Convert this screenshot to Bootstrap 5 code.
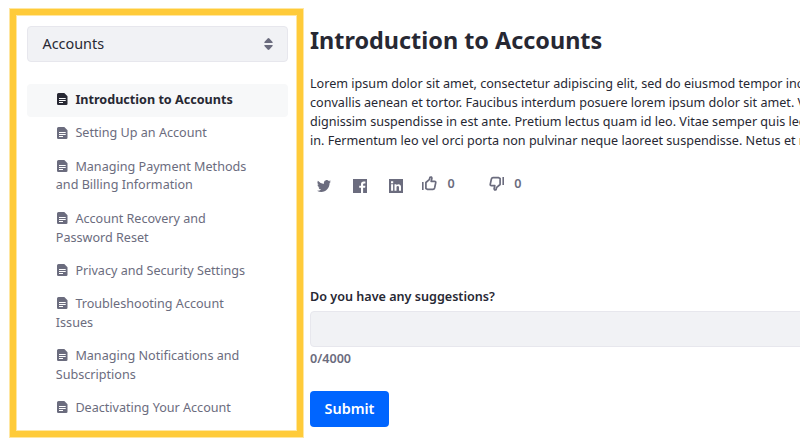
<!DOCTYPE html>
<html lang="en">
<head>
<meta charset="utf-8">
<meta name="viewport" content="width=device-width, initial-scale=1">
<title>Introduction to Accounts</title>
<link rel="stylesheet" href="https://cdn.jsdelivr.net/npm/bootstrap@5.3.0/dist/css/bootstrap.min.css">
<style>
body{font-family:"Noto Sans",sans-serif;font-size:12.6px;line-height:18.9px;color:#272833;background:#fff;height:441px}
.side{width:293px;height:428px;margin:9px 0 0 10px;border:6px solid #ffcb39;box-shadow:0 0 0 1px #ffe7a2,inset 0 0 0 1px #ffe7a2;padding:11px 9px 0 11px}
.picker{height:36px;background:#f1f2f5;border:1px solid #e7e7ed;border-radius:4px;font-size:14.4px;color:#272833;padding:0 14px 0 14.5px}
.topics{margin-top:22px}
.topics .nav-link{color:#6b6c7e;padding:7.2px 37px 7.1px 28.8px;border-radius:4px}
.topics .nav-link.active{background:#f7f8f9;color:#272833;font-weight:700}
.doc{width:11px;height:12px;margin:-3px 7.400px 0 1.200px;vertical-align:middle}
.content{margin-left:7px;min-width:0}
.title{font-size:23.4px;line-height:28px;font-weight:700;margin:26px 0 20px}
.intro{line-height:19px}
.social{color:#6b6c7e;height:20px;margin-top:24px;line-height:19px;font-weight:600}
.social svg{display:block}
.tw{margin:6px 22px 0 7px}
.fb{margin:5px 22px 0 0}
.in{margin:5px 19px 0 0}
.up{margin:2px 10.5px 0 0}
.down{margin:2px 10px 0 34.5px}
.ask{margin-top:93px;line-height:19px;font-weight:600}
.answer{height:36px;width:560px;margin-top:5px;background:#f1f2f5;border:1px solid #e7e7ed;border-radius:4px}
.count{color:#6b6c7e;font-weight:600;line-height:19px;margin-top:2px}
.send{width:79px;height:36px;margin-top:23px;background:#0065ff;border:0;border-radius:4px;font-size:14.4px;font-weight:600;padding:0}
</style>
<script src="https://cdn.jsdelivr.net/npm/bootstrap@5.3.0/dist/js/bootstrap.bundle.min.js"></script>
</head>
<body class="d-flex align-items-start overflow-hidden">
<svg class="d-none" xmlns="http://www.w3.org/2000/svg">
  <symbol id="doc" viewBox="0 0 11 12"><path fill="currentColor" fill-rule="evenodd" d="M1.500 0h5.800L10.500 3.200V10.700q0 1.300-1.300 1.300h-7.900Q0 12 0 10.700V1.500Q0 0 1.500 0ZM2 5v.9h6.700V5ZM2 7v.9h6.700V7ZM2 9v.9h4V9Z"/></symbol>
  <symbol id="thumb" viewBox="0 0 15 15"><path fill="none" stroke="currentColor" stroke-width="1.700" stroke-linejoin="round" d="M3.900 6.500 7.300 3.700 8 1.300Q9.800.500 9.900 2.200L9.200 5.300H12.600Q14 5.300 13.700 6.800L12.600 12Q12.200 13.300 11 13.300H5.300L3.900 12.500Z"/><path fill="currentColor" d="M0 6h1.600v8H0z"/></symbol>
</svg>
<aside class="side flex-shrink-0">
  <button class="picker w-100 d-flex align-items-center justify-content-between">Accounts
    <svg width="9" height="12" viewBox="0 0 9 12" fill="#6b6c7e"><path d="M.4 5V4L3.600.500Q4.500-.300 5.400.500L8.600 4V5ZM.4 7V8L3.600 11.500Q4.500 12.300 5.400 11.500L8.600 8V7Z"/></svg>
  </button>
  <nav class="topics nav flex-column">
    <a class="nav-link active" href="#"><svg class="doc"><use href="#doc"/></svg>Introduction to Accounts</a>
    <a class="nav-link" href="#"><svg class="doc"><use href="#doc"/></svg>Setting Up an Account</a>
    <a class="nav-link" href="#"><svg class="doc"><use href="#doc"/></svg>Managing Payment Methods and Billing Information</a>
    <a class="nav-link" href="#"><svg class="doc"><use href="#doc"/></svg>Account Recovery and Password Reset</a>
    <a class="nav-link" href="#"><svg class="doc"><use href="#doc"/></svg>Privacy and Security Settings</a>
    <a class="nav-link" href="#"><svg class="doc"><use href="#doc"/></svg>Troubleshooting Account Issues</a>
    <a class="nav-link" href="#"><svg class="doc"><use href="#doc"/></svg>Managing Notifications and Subscriptions</a>
    <a class="nav-link" href="#"><svg class="doc"><use href="#doc"/></svg>Deactivating Your Account</a>
  </nav>
</aside>
<main class="content flex-grow-1 overflow-hidden">
  <h1 class="title">Introduction to Accounts</h1>
  <p class="intro mb-0 text-nowrap">Lorem ipsum dolor sit amet, consectetur adipiscing elit, sed do eiusmod tempor incididunt<br>convallis aenean et tortor. Faucibus interdum posuere lorem ipsum dolor sit amet. Viverra<br>dignissim suspendisse in est ante. Pretium lectus quam id leo. Vitae semper quis lectus<br>in. Fermentum leo vel orci porta non pulvinar neque laoreet suspendisse. Netus et malesuada</p>
  <div class="social d-flex">
    <svg class="tw" width="14" height="12" viewBox="0 0 14 12" fill="currentColor"><path d="M14 1.400q-.6.900-1.400 1.500C12.700 8 9 12 4.400 12Q2 12 0 10.700q2.400.2 4.100-1.200Q2 9.300 1.400 7.500h1.200Q.4 6.800.4 4.600q.6.400 1.200.4Q-.300 3.300.900.800 3.400 3.800 6.900 4 6.300.4 9.400 0q1.400-.100 2.400.9.900-.2 1.700-.7-.2 1-1.200 1.600Q13.200 1.800 14 1.400Z"/></svg>
    <svg class="fb" width="14" height="14" viewBox="0 0 14 14" fill="currentColor"><path fill-rule="evenodd" d="M0 0h14v14h-3.900V8.700h2l.3-2h-2.300V5.400q0-1 1.100-1h1.200V2.500h-1.700Q8 2.500 8 5v1.700H6.200v2H8V14H0Z"/></svg>
    <svg class="in" width="14" height="14" viewBox="0 0 14 14"><path fill="currentColor" d="M0 0h14v14H0z"/><path fill="#fff" d="M2.100 5.300h2v6.500h-2zM2 2.300h2.200v2H2zM5.500 5.300h2v.9q2-2 4 0 .5.600.5 1.600v4h-2V8.200q0-1.300-1.200-1.300-1.300 0-1.300 1.400v3.500h-2z"/></svg>
    <svg class="up" width="15" height="15"><use href="#thumb"/></svg>
    <span>0</span>
    <svg class="down" width="15" height="15"><use href="#thumb" transform="rotate(180 7.500 7.500)"/></svg>
    <span>0</span>
  </div>
  <div class="ask">Do you have any suggestions?</div>
  <div class="answer"></div>
  <div class="count">0/4000</div>
  <button class="send btn btn-primary d-block">Submit</button>
</main>
</body>
</html>
